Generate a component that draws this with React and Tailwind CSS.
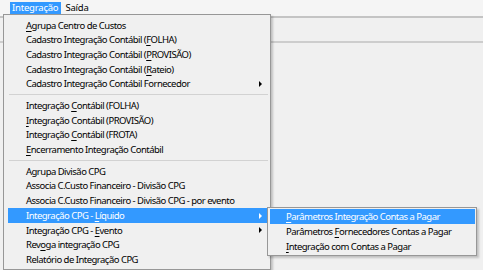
import React from 'react'

const mainItems = [
  { parts: ['', 'A', 'grupa Centro de Custos'] },
  { parts: ['Cadastro Integração Contábil (', 'F', 'OLHA)'] },
  { parts: ['Cadastro Integração Contábil (', 'P', 'ROVISÃO)'] },
  { parts: ['Cadastro Integração Contábil (', 'R', 'ateio)'] },
  { parts: ['Cadastro Integração Contábil Fornecedor', '', ''], sub: true },
  { sep: true },
  { parts: ['Integração ', 'C', 'ontábil (FOLHA)'] },
  { parts: ['', 'I', 'ntegração Contábil (PROVISÃO)'] },
  { parts: ['Integração ', 'C', 'ontábil (FROTA)'] },
  { parts: ['', 'E', 'ncerramento Integração Contábil'] },
  { sep: true },
  { parts: ['Agrupa Divisão CPG', '', ''] },
  { parts: ['Associa C.Custo Financeiro - Divisão CPG', '', ''] },
  { parts: ['Associa C.Custo Financeiro - Divisão CPG - por evento', '', ''] },
  { parts: ['Integração CPG - ', 'L', 'íquido'], sub: true, active: true },
  { parts: ['Integração CPG - ', 'E', 'vento'], sub: true },
  { parts: ['Rev', 'o', 'ga integração CPG'] },
  { parts: ['Relatório de Integração CPG', '', ''] },
]

const subItems = [
  { parts: ['', 'P', 'arâmetros Integração Contas a Pagar'], active: true },
  { parts: ['Parâmetros ', 'F', 'ornecedores Contas a Pagar'] },
  { parts: ['', 'I', 'ntegração com Contas a Pagar'] },
]

const Label = ({ parts }) => (
  <span className="whitespace-nowrap">
    {parts[0]}
    {parts[1] && <span className="underline underline-offset-[1.5px]">{parts[1]}</span>}
    {parts[2]}
  </span>
)

const Arrow = ({ active }) => (
  <span
    className={`ml-auto mr-[6px] w-0 h-0 border-y-[3px] border-y-transparent border-l-[3px] ${active ? 'border-l-white' : 'border-l-black'}`}
  ></span>
)

export default function App() {
  return (
    <div
      className="relative w-[483px] h-[270px] overflow-hidden bg-[#f0f0f0] text-black text-[9.5px] tracking-[-0.52px] leading-none"
      style={{ fontFamily: '"Noto Sans", "Open Sans", sans-serif' }}
    >
      {/* Menu bar */}
      <div className="flex h-[16px] pl-[10px] pt-[2px] bg-[#f5f5f5]">
        <div className="h-[12px] pl-[2px] pr-[3px] flex items-center bg-[#3399ff] text-white tracking-[-0.2px]">Integração</div>
        <div className="h-[12px] px-[4px] flex items-center tracking-[-0.2px]">Saída</div>
      </div>

      {/* Window behind */}
      <div className="h-[2px] bg-[#c4c4c4]"></div>
      <div className="h-[23px] bg-[#f0f0f0]"></div>
      <div className="h-[2px] bg-[#cdcdcd]"></div>

      {/* Main dropdown */}
      <div className="absolute left-[3px] top-[14px] w-[268px] border border-[#979797] bg-[#f0f0f0] pl-[4px] pr-[2px] pt-[3px] pb-[2px] shadow-[2px_2px_2px_rgba(0,0,0,0.2)]">
        {mainItems.map((it, i) =>
          it.sep ? (
            <div key={i} className="h-[7px] flex items-center pl-[1px]">
              <div className="w-full h-[1px] bg-[#d2d2d2]"></div>
            </div>
          ) : (
            <div
              key={i}
              className={`h-[14.7px] flex items-center pl-[18px] ${it.active ? 'bg-[#3399ff] text-white' : ''}`}
            >
              <Label parts={it.parts} />
              {it.sub && <Arrow active={it.active} />}
            </div>
          )
        )}
      </div>

      {/* Submenu */}
      <div className="absolute left-[267px] top-[207px] w-[210px] border border-[#979797] bg-[#f0f0f0] pl-[2px] pr-[1px] py-[1px] shadow-[2px_2px_2px_rgba(0,0,0,0.2)]">
        {subItems.map((it, i) => (
          <div
            key={i}
            className={`h-[15px] flex items-center pl-[16px] ${it.active ? 'bg-[#3399ff] text-white' : ''}`}
          >
            <Label parts={it.parts} />
          </div>
        ))}
      </div>
    </div>
  )
}
